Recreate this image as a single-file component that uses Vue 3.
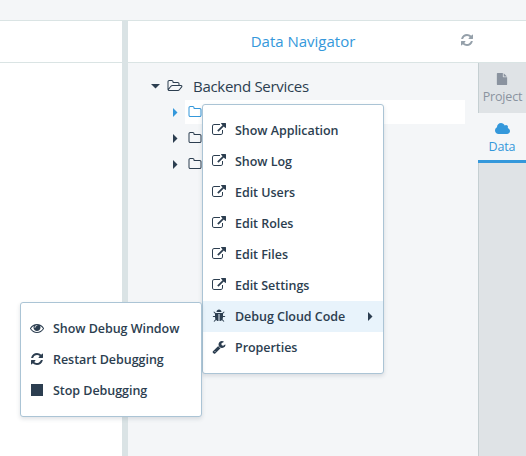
<script setup>
import { h } from 'vue'

const paths = {
  external: 'M1408 928v320q0 119-84.5 203.5t-203.5 84.5h-832q-119 0-203.5-84.5t-84.5-203.5v-832q0-119 84.5-203.5t203.5-84.5h704q14 0 23 9t9 23v64q0 14-9 23t-23 9h-704q-66 0-113 47t-47 113v832q0 66 47 113t113 47h832q66 0 113-47t47-113v-320q0-14 9-23t23-9h64q14 0 23 9t9 23zm384-864v512q0 26-19 45t-45 19-45-19l-176-176-652 652q-10 10-23 10t-23-10l-114-114q-10-10-10-23t10-23l652-652-176-176q-19-19-19-45t19-45 45-19h512q26 0 45 19t19 45z',
  refresh: 'M1639 1056q0 5-1 7-64 268-268 434.5t-478 166.5q-146 0-282.5-55t-243.5-157l-129 129q-19 19-45 19t-45-19-19-45v-448q0-26 19-45t45-19h448q26 0 45 19t19 45-19 45l-137 137q71 66 161 102t187 36q134 0 250-65t186-179q11-17 53-117 8-23 30-23h192q13 0 22.5 9.5t9.5 22.5zm25-800v448q0 26-19 45t-45 19h-448q-26 0-45-19t-19-45 19-45l138-138q-148-137-349-137-134 0-250 65t-186 179q-11 17-53 117-8 23-30 23h-199q-13 0-22.5-9.5t-9.5-22.5v-7q65-268 270-434.5t480-166.5q146 0 284 55.5t245 156.5l130-129q19-19 45-19t45 19 19 45z',
  eye: 'M1664 960q-152-236-381-353 61 104 61 225 0 185-131.5 316.5t-316.5 131.5-316.5-131.5-131.5-316.5q0-121 61-225-229 117-381 353 133 205 333.5 326.5t434.5 121.5 434.5-121.5 333.5-326.5zm-720-384q0-20-14-34t-34-14q-125 0-214.5 89.5t-89.5 214.5q0 20 14 34t34 14 34-14 14-34q0-86 61-147t147-61q20 0 34-14t14-34zm848 384q0 34-20 69-140 230-376.5 368.5t-499.5 138.5-499.5-139-376.5-368q-20-35-20-69t20-69q140-229 376.5-368t499.5-139 499.5 139 376.5 368q20 35 20 69z',
  wrench: 'M448 1472q0-26-19-45t-45-19-45 19-19 45 19 45 45 19 45-19 19-45zm644-420l-682 682q-37 37-90 37-52 0-91-37l-106-108q-38-36-38-90 0-53 38-91l681-681q39 98 114.5 173.5t173.5 114.5zm634-435q0 39-23 106-47 134-164.5 217.5t-258.5 83.5q-185 0-316.5-131.5t-131.5-316.5 131.5-316.5 316.5-131.5q58 0 121.5 16.5t107.5 46.5q16 11 16 28t-16 28l-293 169v224l193 107q5-3 79-48.5t135.5-81 70.5-35.5q15 0 23.5 10t8.5 25z',
  bug: 'M1696 960q0 26-19 45t-45 19h-224q0 171-67 290l208 209q19 19 19 45t-19 45q-18 19-45 19t-45-19l-198-197q-5 5-15 13t-42 28.5-65 36.5-82 29-97 13v-896h-128v896q-51 0-101.5-13.5t-87-33-66-39-43.5-32.5l-15-14-183 207q-20 21-48 21-24 0-43-16-19-18-20.5-44.5t15.5-46.5l202-227q-58-114-58-274h-224q-26 0-45-19t-19-45 19-45 45-19h224v-294l-173-173q-19-19-19-45t19-45 45-19 45 19l173 173h844l173-173q19-19 45-19t45 19 19 45-19 45l-173 173v294h224q26 0 45 19t19 45zm-480-576h-640q0-133 93.5-226.5t226.5-93.5 226.5 93.5 93.5 226.5z',
  cloud: 'M1920 1152q0 159-112.5 271.5t-271.5 112.5h-1088q-185 0-316.5-131.5t-131.5-316.5q0-132 71-241.5t187-163.5q-2-28-2-43 0-212 150-362t362-150q158 0 286.5 88t187.5 230q70-62 166-62 106 0 181 75t75 181q0 75-41 138 129 30 213 134.5t84 239.5z',
  file: 'M1152 512v-472q22 14 36 28l408 408q14 14 28 36h-472zm-128 32q0 40 28 68t68 28h544v1056q0 40-28 68t-68 28h-1344q-40 0-68-28t-28-68v-1600q0-40 28-68t68-28h800v544z',
  folder: 'M1600 1312v-704q0-40-28-68t-68-28h-704q-40 0-68-28t-28-68v-64q0-40-28-68t-68-28h-320q-40 0-68 28t-28 68v960q0 40 28 68t68 28h1216q40 0 68-28t28-68zm128-704v704q0 92-66 158t-158 66h-1216q-92 0-158-66t-66-158v-960q0-92 66-158t158-66h320q92 0 158 66t66 158v32h672q92 0 158 66t66 158z',
  folderOpen: 'M1845 931q0-35-53-35h-1088q-40 0-85.5 21.5t-71.5 52.5l-294 363q-18 24-18 40 0 35 53 35h1088q40 0 86-22t71-53l294-363q18-22 18-39zm-1141-163h768v-160q0-40-28-68t-68-28h-576q-40 0-68-28t-28-68v-64q0-40-28-68t-68-28h-320q-40 0-68 28t-28 68v853l256-315q44-53 116-87.5t140-34.5zm1269 163q0 62-46 120l-295 363q-43 53-116 87.5t-140 34.5h-1088q-92 0-158-66t-66-158v-960q0-92 66-158t158-66h320q92 0 158 66t66 158v32h544q92 0 158 66t66 158v160h192q54 0 99 24.5t67 70.5q15 32 15 68z',
  stop: 'M128 128h1536v1536h-1536z',
  right: 'M0 0l900 896-900 896z',
  down: 'M0 0h1792l-896 900z',
}

const Icon = (props) =>
  h('svg', { viewBox: '0 0 1792 1792', class: 'icon' }, [h('path', { d: paths[props.name] })])
Icon.props = ['name']

const menu = [
  { icon: 'external', label: 'Show Application' },
  { icon: 'external', label: 'Show Log' },
  { icon: 'external', label: 'Edit Users' },
  { icon: 'external', label: 'Edit Roles' },
  { icon: 'external', label: 'Edit Files' },
  { icon: 'external', label: 'Edit Settings' },
  { icon: 'bug', label: 'Debug Cloud Code', sub: true },
  { icon: 'wrench', label: 'Properties' },
]
const submenu = [
  { icon: 'eye', label: 'Show Debug Window' },
  { icon: 'refresh', label: 'Restart Debugging' },
  { icon: 'stop', label: 'Stop Debugging' },
]
</script>

<template>
  <div class="screen">
    <div class="topbar"></div>
    <div class="columns">
      <div class="left"><div class="head"></div></div>
      <div class="splitter"></div>
      <div class="right">
        <div class="head">
          <span class="title">Data Navigator</span>
          <Icon name="refresh" class="reload" />
        </div>
        <div class="content">
          <div class="tree">
            <div class="root">
              <Icon name="down" class="caret" />
              <Icon name="folderOpen" class="open" />
              <span>Backend Services</span>
            </div>
            <div v-for="n in 3" :key="n" class="node" :class="{ selected: n === 1 }">
              <Icon name="right" class="arrow" />
              <div class="label"><Icon name="folder" /></div>
            </div>
          </div>
          <div class="tabs">
            <div class="tab">
              <Icon name="file" class="file" />
              <span>Project</span>
            </div>
            <div class="tab active">
              <Icon name="cloud" />
              <span>Data</span>
            </div>
            <div class="rest"></div>
          </div>
        </div>
      </div>
    </div>

    <div class="menu main">
      <div v-for="m in menu" :key="m.label" class="item" :class="{ hover: m.sub }">
        <Icon :name="m.icon" :class="m.icon" />
        <span>{{ m.label }}</span>
        <Icon v-if="m.sub" name="right" class="arrow" />
      </div>
    </div>
    <div class="menu sub">
      <div v-for="m in submenu" :key="m.label" class="item">
        <Icon :name="m.icon" :class="m.icon" />
        <span>{{ m.label }}</span>
      </div>
    </div>
  </div>
</template>

<style>
body { margin: 0; overflow: hidden; }
</style>

<style scoped>
.screen {
  position: relative;
  width: 526px;
  height: 456px;
  display: flex;
  flex-direction: column;
  background: #fff;
  color: #2c3e50;
  font-family: "Open Sans", sans-serif;
  overflow: hidden;
}
.screen * { box-sizing: border-box; }
.icon {
  display: block;
  flex: none;
  width: 14px;
  height: 14px;
  fill: currentColor;
  overflow: visible;
}
.topbar { height: 21px; background: #f4f6f8; border-bottom: 1px solid #dae4e4; }
.columns { flex: 1; display: flex; }
.left { width: 122px; }
.splitter { width: 6px; background: #dae3e5; }
.right { flex: 1; display: flex; flex-direction: column; background: #f4f6f8; }
.head {
  display: flex;
  align-items: center;
  height: 42px;
  background: #fff;
  border-bottom: 1px solid #dae4e4;
}
.title {
  width: 332px;
  padding: 0 0 2px 18px;
  text-align: center;
  color: #3498db;
  font-size: 15px;
  font-weight: 500;
  white-space: nowrap;
}
.reload { color: #95a0aa; margin-top: -3px; }
.content { flex: 1; display: flex; }
.tree { flex: 1; padding-top: 10px; }
.root { display: flex; align-items: center; height: 26px; font-size: 15px; letter-spacing: -0.3px; padding-left: 22px; }
.root .caret { width: 9px; height: 9px; margin: 5px 8px 0 1px; }
.root .open { margin: 0 12px 1px -1px; }
.root span { padding-bottom: 1px; }
.node { display: flex; align-items: center; height: 26px; padding-left: 45px; }
.arrow { width: 9px; height: 9px; }
.node .label {
  flex: 1;
  display: flex;
  align-items: center;
  height: 24px;
  margin: 0 13px 0 3px;
  padding-left: 2.5px;
}
.selected { color: #3498db; }
.selected .label { background: #fff; }
.tabs { width: 48px; display: flex; flex-direction: column; font-size: 12.5px; letter-spacing: -0.15px; }
.tab {
  height: 50px;
  display: flex;
  flex-direction: column;
  align-items: center;
  padding-top: 9px;
  line-height: 18px;
  background: #dfe3e6;
  border-left: 1px solid #c5cfd2;
  color: #8a939f;
}
.tab span { margin-top: 2px; }
.file { width: 12px; margin-right: 2px; }
.tab.active { background: #f4f6f8; color: #3498db; border-left: 0; border-bottom: 3px solid #3498db; }
.rest { flex: 1; background: #dfe3e6; border-left: 1px solid #c5cfd2; }
.menu {
  position: absolute;
  width: 182px;
  padding: 10px 0;
  background: #fff;
  border: 1px solid #abc4d5;
  border-radius: 3px;
  box-shadow: 0 2px 4px rgba(44, 62, 80, 0.15);
  font-size: 12.5px;
  font-weight: 600;
}
.main { left: 202px; top: 104px; }
.sub { left: 20px; top: 302px; }
.item { display: flex; align-items: center; height: 31px; padding: 0 6px 0 9px; }
.item .icon { margin-bottom: 1px; }
.item span { margin-left: 9px; letter-spacing: -0.04px; white-space: nowrap; }
.item .arrow { margin: 0 0 0 auto; }
.hover { background: #e8f3fb; }
</style>
